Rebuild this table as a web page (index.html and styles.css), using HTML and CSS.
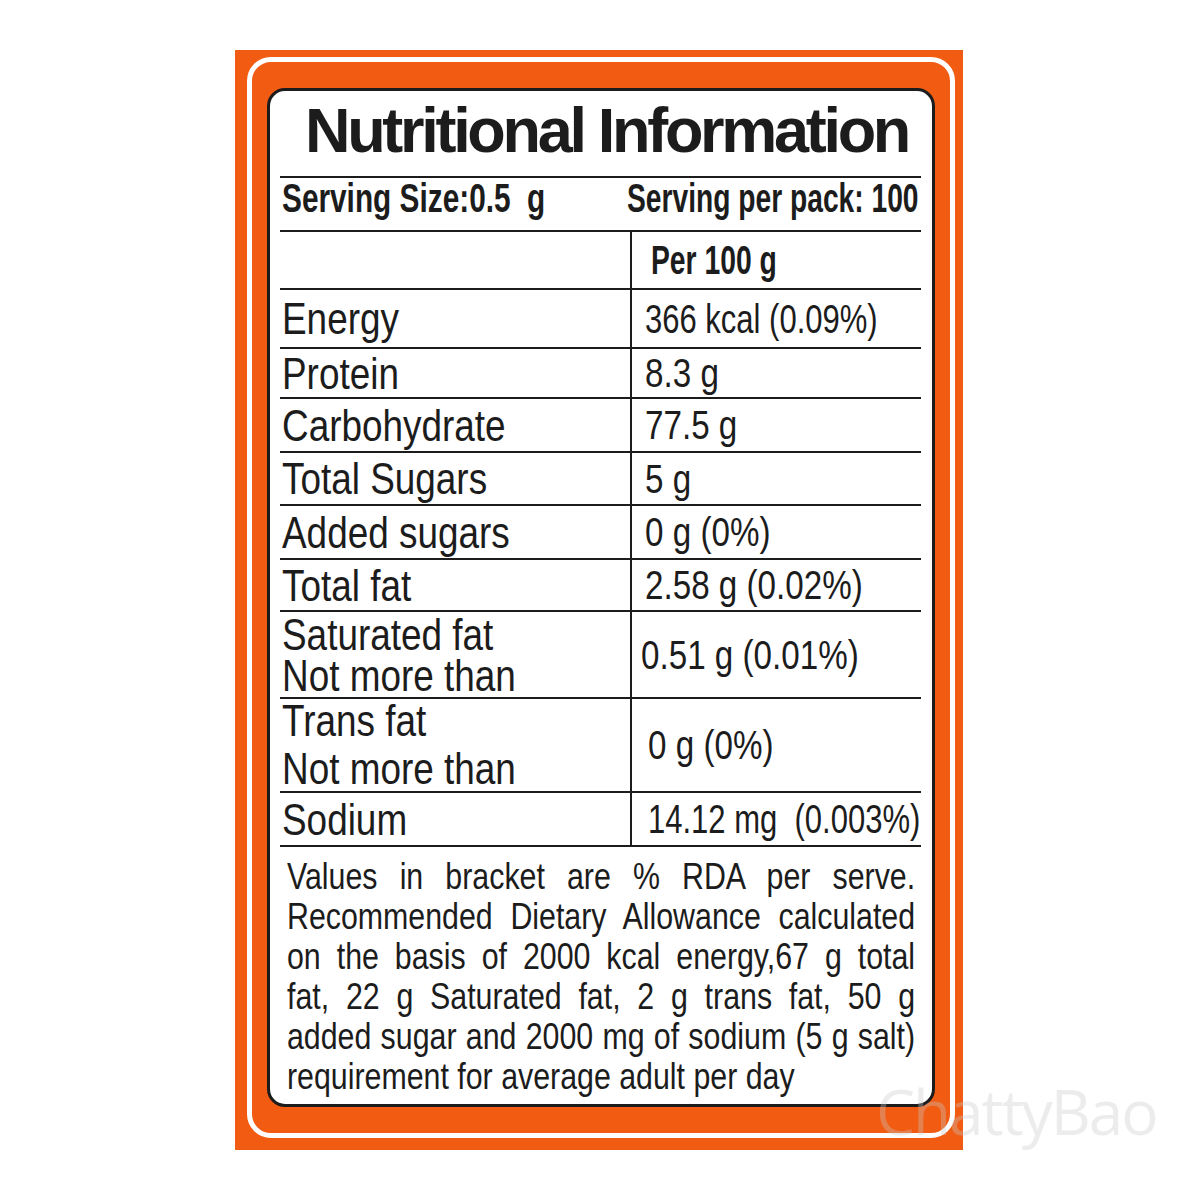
FILE: index.html
```html
<!DOCTYPE html>
<html lang="en">
<head>
<meta charset="utf-8">
<title>Nutritional Information</title>
<link rel="stylesheet" href="styles.css">
</head>
<body>
<div class="panel">
  <div class="ring">
    <div class="card">
      <div class="title">Nutritional Information</div>
      <div class="serving">
        <span class="sv sv-left">Serving Size:0.5&nbsp;&nbsp;g</span>
        <span class="sv sv-right">Serving per pack: 100</span>
      </div>
      <div class="facts">
        <div class="cell label"></div>
        <div class="cell value head"><span class="t">Per 100 g</span></div>

        <div class="cell label"><span class="t">Energy</span></div>
        <div class="cell value narrow"><span class="t">366 kcal (0.09%)</span></div>

        <div class="cell label"><span class="t">Protein</span></div>
        <div class="cell value"><span class="t">8.3 g</span></div>

        <div class="cell label"><span class="t">Carbohydrate</span></div>
        <div class="cell value"><span class="t">77.5 g</span></div>

        <div class="cell label"><span class="t">Total Sugars</span></div>
        <div class="cell value"><span class="t">5 g</span></div>

        <div class="cell label"><span class="t">Added sugars</span></div>
        <div class="cell value"><span class="t">0 g (0%)</span></div>

        <div class="cell label"><span class="t">Total fat</span></div>
        <div class="cell value"><span class="t">2.58 g (0.02%)</span></div>

        <div class="cell label sat"><span class="t">Saturated fat</span><span class="t">Not more than</span></div>
        <div class="cell value tight"><span class="t">0.51 g (0.01%)</span></div>

        <div class="cell label trans"><span class="t">Trans fat</span><span class="t">Not more than</span></div>
        <div class="cell value wide"><span class="t">0 g (0%)</span></div>

        <div class="cell label"><span class="t">Sodium</span></div>
        <div class="cell value wide narrow"><span class="t">14.12 mg&nbsp; (0.003%)</span></div>
      </div>
      <div class="note">
        <span class="line">Values in bracket are % RDA per serve.</span>
        <span class="line">Recommended Dietary Allowance calculated</span>
        <span class="line">on the basis of 2000 kcal energy,67 g total</span>
        <span class="line">fat, 22 g Saturated fat, 2 g trans fat, 50 g</span>
        <span class="line">added sugar and 2000 mg of sodium (5 g salt)</span>
        <span class="line last">requirement for average adult per day</span>
      </div>
    </div>
  </div>
</div>
<div class="watermark">ChattyBao</div>
</body>
</html>
```

FILE: styles.css
```css
html, body {
  margin: 0;
  padding: 0;
  background: #ffffff;
}

body {
  position: relative;
  width: 1200px;
  height: 1200px;
  font-family: "Liberation Sans", Arial, sans-serif;
  color: #1c1c1c;
}

.panel {
  margin: 50px 0 0 235px;
  width: 728px;
  height: 1100px;
  box-sizing: border-box;
  background: #f15b12;
  padding: 7px 8px 12px 12px;
}

.ring {
  height: 100%;
  box-sizing: border-box;
  border: 5px solid #ffffff;
  border-radius: 24px;
  padding: 26px 15px 26px 15px;
}

.card {
  height: 100%;
  box-sizing: border-box;
  border: 3px solid #1c1c1c;
  border-radius: 18px;
  background: #ffffff;
  padding: 0 11px 0 10px;
  display: flex;
  flex-direction: column;
}

.title {
  height: 87px;
  box-sizing: border-box;
  border-bottom: 2px solid #1c1c1c;
  padding-top: 8px;
  padding-left: 12px;
  text-align: center;
  font-weight: bold;
  font-size: 63px;
  line-height: 1;
  letter-spacing: -3.3px;
  white-space: nowrap;
}

/* condensed text: Arial metrics narrowed like a condensed face */
.t,
.sv {
  display: inline-block;
  white-space: nowrap;
  transform-origin: 0 50%;
}

.serving {
  height: 54px;
  box-sizing: border-box;
  border-bottom: 2px solid #1c1c1c;
  display: flex;
  justify-content: space-between;
  padding: 0 2px 0 2px;
  font-weight: bold;
  font-size: 40px;
  line-height: 1;
  white-space: nowrap;
}

.sv-left {
  flex: 0 0 0;
  min-width: 0;
  transform: scaleX(0.745);
}

.sv-right {
  flex: none;
  transform: scaleX(0.705);
  transform-origin: 100% 50%;
}

.facts {
  display: grid;
  grid-template-columns: 352px 289px;
  grid-template-rows: 58px 59px 50px 54px 53px 54px 52px 87px 94px 54px;
}

.cell {
  min-width: 0;
  box-sizing: border-box;
  border-bottom: 2px solid #1c1c1c;
  display: flex;
  flex-direction: column;
  justify-content: center;
  align-items: flex-start;
  white-space: nowrap;
}

.label {
  border-right: 2px solid #1c1c1c;
  padding-left: 2px;
  font-size: 45px;
  line-height: 1;
}

.label .t {
  transform: scaleX(0.82);
}

.label.sat {
  line-height: 41px;
}

.label.trans {
  line-height: 48px;
}

.value {
  padding-left: 13px;
  font-size: 40px;
  line-height: 1;
}

.value .t {
  transform: scaleX(0.83);
}

.value.narrow .t {
  transform: scaleX(0.775);
}

.value.head {
  padding-left: 19px;
  font-weight: bold;
  font-size: 41px;
}

.value.head .t {
  transform: scaleX(0.69);
}

.value.tight {
  padding-left: 9px;
}

.value.wide {
  padding-left: 16px;
}

.note {
  flex: 1;
  padding: 10px 6px 0 7px;
  font-size: 37px;
  line-height: 40px;
}

.line {
  display: block;
  width: 766px;
  text-align: justify;
  text-align-last: justify;
  white-space: nowrap;
  transform: scaleX(0.82);
  transform-origin: 0 50%;
}

.line.last {
  text-align-last: left;
}

.watermark {
  position: absolute;
  left: 876px;
  top: 1080px;
  font-family: "Open Sans", sans-serif;
  font-size: 62px;
  line-height: 1;
  letter-spacing: -2px;
  color: rgba(200, 200, 200, 0.35);
  white-space: nowrap;
}
```
